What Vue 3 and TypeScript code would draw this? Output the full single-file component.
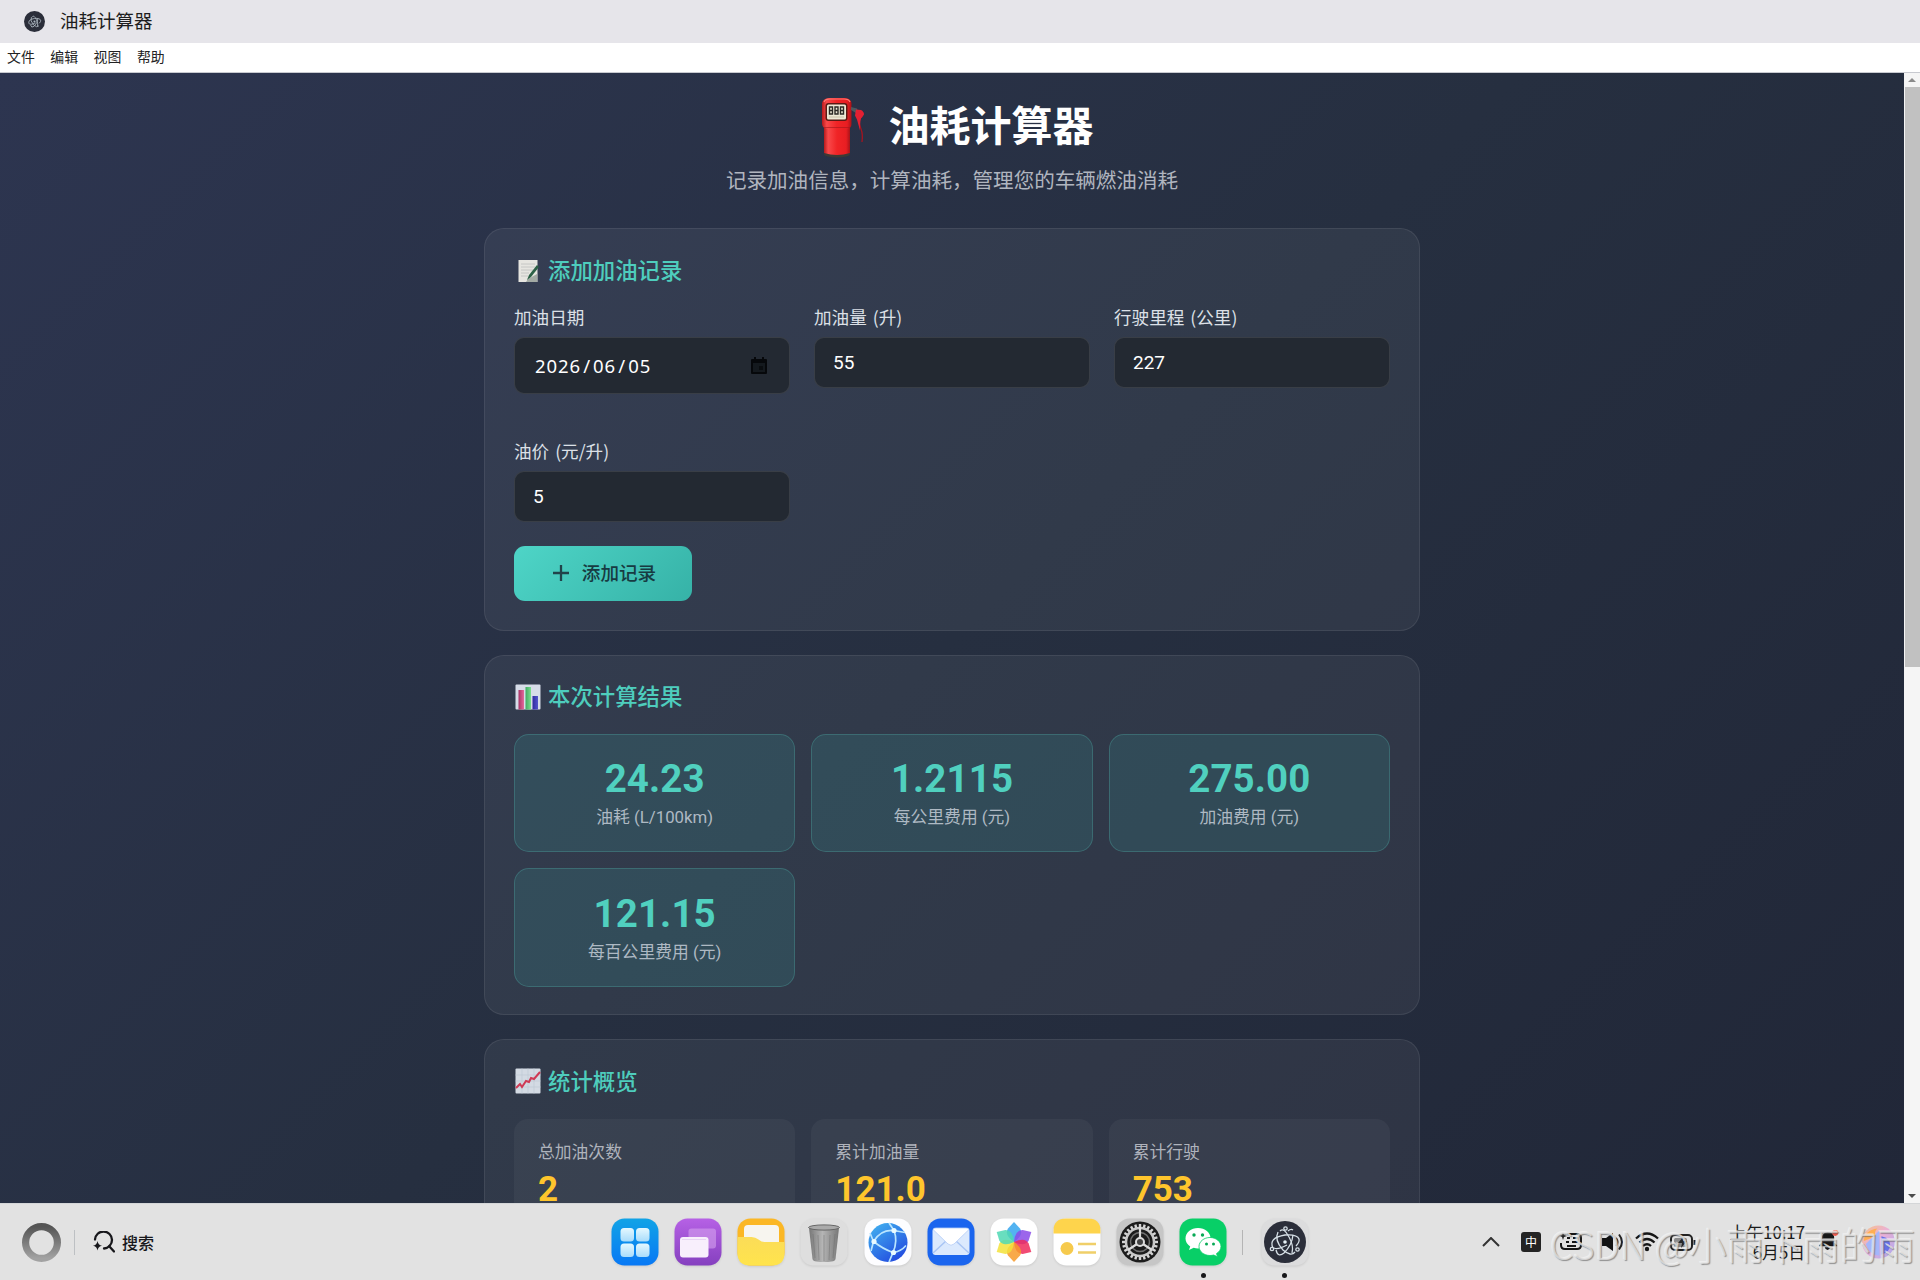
<script setup lang="ts">
interface Metric { value: string; label: string }

const menus: string[] = ['文件', '编辑', '视图', '帮助']

const fields: { label: string; value: string; date?: boolean }[] = [
  { label: '加油日期', value: '2026/06/05', date: true },
  { label: '加油量 (升)', value: '55' },
  { label: '行驶里程 (公里)', value: '227' },
  { label: '油价 (元/升)', value: '5' },
]

const results: Metric[] = [
  { value: '24.23', label: '油耗 (L/100km)' },
  { value: '1.2115', label: '每公里费用 (元)' },
  { value: '275.00', label: '加油费用 (元)' },
  { value: '121.15', label: '每百公里费用 (元)' },
]

const stats: Metric[] = [
  { label: '总加油次数', value: '2' },
  { label: '累计加油量', value: '121.0' },
  { label: '累计行驶', value: '753' },
]

const petals: { angle: number; color: string }[] = [
  { angle: 0, color: '#35a6ee' },
  { angle: 60, color: '#8a4be8' },
  { angle: 120, color: '#ee2c5c' },
  { angle: 180, color: '#f79a2a' },
  { angle: 240, color: '#f3e23a' },
  { angle: 300, color: '#4fd8b4' },
]

const teeth: number[] = Array.from({ length: 24 }, (_, i) => i * 15)
</script>

<template>
  <div class="desktop">
    <header class="titlebar">
      <svg class="app-icon" viewBox="0 0 48 48">
        <circle cx="24" cy="24" r="24" fill="#2b2e3a" />
        <g fill="none" stroke="#a9b3bd" stroke-width="2">
          <path d="M12 30Q7 20 24 17q12-1 14 4 .8 3-3 7" /><path d="M19 13q4-4 9 6 5 9 3 16" /><path d="M13 30q4 2 13-3M15 32q2 8 8 3 8-8 9-18M17 14q-4 8 5 18 8 7 12 2" />
        </g>
        <circle cx="24" cy="24" r="2.4" fill="#a9b3bd" />
      </svg>
      <span>油耗计算器</span>
    </header>
    <nav class="menubar"><span v-for="m in menus" :key="m">{{ m }}</span></nav>

    <div class="viewport">
      <main class="page">
        <div class="hero">
          <svg class="pump" viewBox="0 0 44 62">
            <defs>
              <linearGradient id="pumpRed" x1="0" x2="1">
                <stop offset="0" stop-color="#b81a1c" /><stop offset=".16" stop-color="#f9494a" />
                <stop offset=".5" stop-color="#f02426" /><stop offset=".85" stop-color="#e81e22" /><stop offset="1" stop-color="#a91318" />
              </linearGradient>
            </defs>
            <ellipse cx="16" cy="57" rx="13" ry="3.6" fill="#3d3a35" />
            <path d="M3 28h26v28q-13 4-26 0z" fill="url(#pumpRed)" />
            <path d="M1 6Q2 1.500 8 1h16q6 .5 6.500 5v21q0 4-4 4.500h-21Q1.500 31 1 27z" fill="url(#pumpRed)" />
            <path d="M3 30.500h26" stroke="#a3161a" stroke-width="1" opacity=".6" />
            <path d="M3 5q1-3 6-3h14q5 0 6 3" fill="none" stroke="#ff7b74" stroke-width="1.200" />
            <rect x="4.500" y="6" width="22" height="18" rx="3" fill="#5a1a14" />
            <rect x="6" y="7.500" width="19" height="15" rx="1.500" fill="#eee9d6" />
            <g fill="none" stroke="#2b2925" stroke-width="1.400">
              <path d="M8.500 10h3v7h-3zM8.500 13.500h3M14 10h3v7h-3zM14 13.500h3M19.500 10h3v7h-3zM19.500 13.500h3" />
            </g>
            <path d="M8 20h15" stroke="#c7bea6" />
            <path d="M38 22q0 6 2 10 2 5 1 13" fill="none" stroke="#a51420" stroke-width="1.300" />
            <path d="M30 10l6 1.500 1 3-2 1.500-5-3z" fill="#4d575e" />
            <path d="M35 12.500l5 .5q3 1.500 3 4.500l-2 3q-2 0-2 13l-3-11-2-4z" fill="#e32032" />
          </svg>
          <h1>油耗计算器</h1>
        </div>
        <p class="subtitle">记录加油信息，计算油耗，管理您的车辆燃油消耗</p>

        <section class="card form-card">
          <h2>
            <svg viewBox="0 0 28 28">
              <rect x="4.500" y="4" width="19" height="22" fill="#e6e5e0" />
              <path d="M7 8h14M7 11h14M7 14h12M7 17h8M7 20h7" stroke="#bdbfbe" stroke-width=".8" />
              <path d="M14 23l-2 3h11v-8z" fill="#77827c" opacity=".6" />
              <path d="M23 9l2 2-8 10-4 3 2-5z" fill="#2c6046" />
            </svg><span>添加加油记录</span>
          </h2>
          <div class="form-grid">
            <div v-for="f in fields" :key="f.label" class="field">
              <label>{{ f.label }}</label>
              <div v-if="f.date" class="input date">
                <span><template v-for="(part, i) in f.value.split('/')" :key="i"><i v-if="i > 0">/</i>{{ part }}</template></span>
                <svg viewBox="0 0 16 17">
                  <path d="M3 0h2v2h6V0h2v2h2q1 0 1 1v13q0 1-1 1H1q-1 0-1-1V3q0-1 1-1h2zM2 6v9h12V6z" fill="#06080b" fill-rule="evenodd" />
                  <rect x="2" y="6" width="12" height="9" fill="#14191e" />
                  <rect x="8" y="9" width="4" height="4" fill="#0a0d10" />
                </svg>
              </div>
              <div v-else class="input"><span>{{ f.value }}</span></div>
            </div>
          </div>
          <button type="button">
            <svg viewBox="0 0 16 16"><path d="M8 0v16M0 8h16" stroke="#21434a" stroke-width="2.300" /></svg><span>添加记录</span>
          </button>
        </section>

        <section class="card result-card">
          <h2>
            <svg viewBox="0 0 28 28">
              <defs>
                <linearGradient id="barPink" x1="0" x2="1"><stop stop-color="#a83365" /><stop offset="1" stop-color="#e36a9c" /></linearGradient>
                <linearGradient id="barGreen" x1="0" x2="1"><stop stop-color="#3eab62" /><stop offset="1" stop-color="#7be08f" /></linearGradient>
                <linearGradient id="barBlue" x1="0" x2="1"><stop stop-color="#302a9e" /><stop offset="1" stop-color="#5355cd" /></linearGradient>
              </defs>
              <rect x="1.500" y="1.500" width="25" height="25" rx="1" fill="#d6dce8" />
              <rect x="4.500" y="7" width="5.500" height="19.500" fill="url(#barPink)" />
              <rect x="11.500" y="4" width="5.500" height="22.500" fill="url(#barGreen)" />
              <rect x="18.500" y="13" width="5.500" height="13.500" fill="url(#barBlue)" />
            </svg><span>本次计算结果</span>
          </h2>
          <div class="grid">
            <div v-for="r in results" :key="r.label" class="result">
              <strong>{{ r.value }}</strong><span>{{ r.label }}</span>
            </div>
          </div>
        </section>

        <section class="card stats-card">
          <h2>
            <svg viewBox="0 0 28 28">
              <rect x="1.500" y="1.500" width="25" height="25" rx="1" fill="#d3dae3" />
              <path d="M1.500 8h25M1.500 14h25M1.500 20h25M8 1.500v25M14 1.500v25M20 1.500v25" stroke="#bec9d4" stroke-width=".7" />
              <path d="M2 21l4-4 2 3 4-6 3 1 2-4 3 1 6-7" fill="none" stroke="#cf3a55" stroke-width="2" />
            </svg><span>统计概览</span>
          </h2>
          <div class="grid">
            <div v-for="s in stats" :key="s.label" class="stat">
              <span>{{ s.label }}</span><strong>{{ s.value }}</strong>
            </div>
          </div>
        </section>
      </main>
      <aside class="scrollbar">
        <svg viewBox="0 0 16 14"><path d="M4 9l4-4 4 4z" fill="#8b8b8b" /></svg>
        <div class="thumb"></div>
        <svg class="down" viewBox="0 0 16 14"><path d="M4 5l4 4 4-4z" fill="#4c4c4c" /></svg>
      </aside>
    </div>

    <footer class="taskbar">
      <div class="left">
        <svg class="home" viewBox="0 0 38 38">
          <defs><linearGradient id="ring" x2="0" y2="1"><stop stop-color="#555" /><stop offset="1" stop-color="#a2a2a2" /></linearGradient></defs>
          <circle cx="19" cy="19" r="15.500" fill="none" stroke="url(#ring)" stroke-width="7" />
        </svg>
        <i class="divider"></i>
        <svg class="search" viewBox="0 0 22 22">
          <path d="M2 8.500A8.500 8.500 0 1 1 11 17.500M16 15l5 5.500" fill="none" stroke="#17171b" stroke-width="2.300" stroke-linecap="round" />
          <path d="M4.500 10q.6 4 4.500 4.700-3.900.7-4.500 4.800-.6-4.100-4.500-4.800 3.900-.7 4.500-4.700z" fill="#17171b" />
        </svg>
        <span>搜索</span>
      </div>

      <div class="dock">
        <svg viewBox="0 0 48 48">
          <defs><linearGradient id="launch" x2="0" y2="1"><stop stop-color="#11a3e6" /><stop offset="1" stop-color="#0878f5" /></linearGradient>
            <linearGradient id="tile" x2="0" y2="1"><stop stop-color="#e5f8ff" /><stop offset="1" stop-color="#a9dcfb" /></linearGradient></defs>
          <rect x=".5" y=".5" width="47" height="47" rx="13" fill="url(#launch)" />
          <g fill="url(#tile)"><rect x="9.500" y="10" width="13.500" height="13.500" rx="3.500" /><rect x="25" y="10" width="13.500" height="13.500" rx="3.500" /><rect x="9.500" y="25.500" width="13.500" height="13.500" rx="3.500" /><rect x="25" y="25.500" width="13.500" height="13.500" rx="3.500" /></g>
        </svg>
        <svg viewBox="0 0 48 48">
          <defs><linearGradient id="violet" x2="0" y2="1"><stop stop-color="#b661e5" /><stop offset="1" stop-color="#8540bf" /></linearGradient></defs>
          <rect x=".5" y=".5" width="47" height="47" rx="13" fill="url(#violet)" />
          <rect x="14.500" y="10.500" width="27.500" height="20" rx="3" fill="#d6a2ee" opacity=".6" />
          <rect x="6" y="19" width="28.500" height="20.500" rx="3" fill="#f8effc" />
          <path d="M8 21.500h24" stroke="#e8d4f4" />
        </svg>
        <svg viewBox="0 0 48 48">
          <defs><linearGradient id="folder" x2="0" y2="1"><stop stop-color="#fbdc58" /><stop offset="1" stop-color="#ffe44c" /></linearGradient></defs>
          <rect x=".5" y=".5" width="47" height="47" rx="13" fill="#fbb725" />
          <path d="M7 22V11q0-4 4-4h27q4 0 4 4v15H7z" fill="#f7f5ef" />
          <path d="M.5 19h14q4 0 7 2.500t6 2.500h20v11q0 12.500-13 12.500h-21Q.5 47.500 .5 35z" fill="url(#folder)" />
        </svg>
        <svg viewBox="0 0 48 48">
          <defs><linearGradient id="bin"><stop stop-color="#777" /><stop offset=".45" stop-color="#b5b5b5" /><stop offset="1" stop-color="#777" /></linearGradient></defs>
          <rect x=".5" y=".5" width="47" height="47" rx="13" fill="#dedede" />
          <path d="M9 10l3.500 31q.5 2 4 2.500 8 1 15 0 3.500-.5 4-2.500L39 10z" fill="url(#bin)" />
          <ellipse cx="24" cy="9.500" rx="15.500" ry="2.600" fill="#aaa" stroke="#666" />
          <path d="M13 16l2 24M18 17l1 25M24 17v26M30 17l-1 25M35 16l-2 24" stroke="#696969" opacity=".4" />
        </svg>
        <svg viewBox="0 0 48 48">
          <defs><linearGradient id="globe" x1=".1" x2=".8" y2="1"><stop stop-color="#42b2ef" /><stop offset="1" stop-color="#2147df" /></linearGradient></defs>
          <rect x=".5" y=".5" width="47" height="47" rx="13" fill="#fdfdff" />
          <circle cx="24" cy="24.500" r="19.500" fill="url(#globe)" />
          <g fill="none" stroke="#b9e5ff" stroke-width="1.700"><path d="M9.500 23.500Q17 11 30 12.500M9.500 23.500Q19 31 29 34.500M30 12.500Q34 23 29 34.500M25 5l5 7.500 11 2M6 15l3.500 8.500L7 33M29 34.500L25 44M29 34.500q8-1 13-7" /></g>
          <circle cx="30" cy="12.500" r="2.600" fill="#e9faff" /><circle cx="10" cy="23.500" r="2.600" fill="#e9faff" /><circle cx="29.500" cy="34.500" r="2.600" fill="#e9faff" />
        </svg>
        <svg viewBox="0 0 48 48">
          <rect x=".5" y=".5" width="47" height="47" rx="13" fill="#1b65ee" />
          <rect x="5.500" y="10" width="37" height="27" rx="3" fill="#dbe9fd" />
          <path d="M6 35l13-12M42 35L29 23" stroke="#a9c5f4" stroke-width="1.500" />
          <path d="M6 11.500l15 14.500q3 2.500 6 0l15-14.500q-1-1.500-3-1.500H9q-2 0-3 1.500z" fill="#fff" stroke="#b4ccf6" stroke-width=".8" />
        </svg>
        <svg viewBox="0 0 48 48">
          <rect x=".5" y=".5" width="47" height="47" rx="13" fill="#fff" />
          <path v-for="p in petals" :key="p.angle" d="M24 24Q14 17 18 10.500L24 4l6 6.500Q34 17 24 24z" :fill="p.color" opacity=".85" :transform="`rotate(${p.angle} 24 24)`" />
        </svg>
        <svg viewBox="0 0 48 48">
          <rect x=".5" y=".5" width="47" height="47" rx="13" fill="#fff" />
          <path d="M.5 15.500V13Q.5 .5 13 .5h22Q47.500 .5 47.500 13v2.500z" fill="#fed44c" />
          <circle cx="14" cy="30.500" r="6.500" fill="#f6ca4d" />
          <path d="M25 26h18M25 34.500h18" stroke="#f0cf69" stroke-width="2.600" />
        </svg>
        <svg viewBox="0 0 48 48">
          <rect x=".5" y=".5" width="47" height="47" rx="13" fill="#c6c6c6" />
          <circle cx="24" cy="24" r="20.500" fill="#1c1c1c" />
          <path v-for="t in teeth" :key="t" d="M24 6v4" stroke="#d5d5d5" stroke-width="2.400" :transform="`rotate(${t} 24 24)`" />
          <circle cx="24" cy="24" r="14" fill="none" stroke="#c9c9c9" stroke-width="2.500" />
          <circle cx="24" cy="24" r="9.500" fill="none" stroke="#707070" stroke-width="1.500" />
          <path d="M24 24V9M24 24l-12 8M24 24l12 8" stroke="#ddd" stroke-width="2.200" />
          <circle cx="24" cy="24" r="4" fill="#444" stroke="#ddd" stroke-width="2" />
        </svg>
        <svg viewBox="0 0 48 48">
          <rect x=".5" y=".5" width="47" height="47" rx="13" fill="#08cf67" />
          <path d="M19 10C12 10 6.500 14.500 6.500 20.500c0 3.300 1.800 6 4.700 8L10 32l4.700-2.200c1.400.4 2.800.6 4.300.6 7 0 12.500-4.300 12.500-10S26 10 19 10z" fill="#fff" />
          <path d="M31 19.500c-6 0-11 4-11 9s5 9 11 9c1.300 0 2.600-.2 3.700-.5l3.800 1.800-1-3.200c2.700-1.600 4.500-4.200 4.500-7.100 0-5-5-9-11-9z" fill="#fff" stroke="#08cf67" stroke-width=".8" />
          <g fill="#08a955"><circle cx="15" cy="17" r="1.700" /><circle cx="23.500" cy="17" r="1.700" /><circle cx="27.500" cy="26" r="1.500" /><circle cx="34.500" cy="26" r="1.500" /></g>
        </svg>
        <i class="divider"></i>
        <svg viewBox="0 0 48 48">
          <rect x=".5" y=".5" width="47" height="47" rx="13" fill="#dcdcdd" />
          <circle cx="24" cy="24" r="21" fill="#2b2e3a" />
          <g fill="none" stroke="#d7e0e7" stroke-width="1.300">
            <path d="M12 30Q7 20 24 17q12-1 14 4 .8 3-3 7" /><path d="M19 13q4-4 9 6 5 9 3 16" /><path d="M32 12q-2-1.500-5 1M13 30q4 2 13-3M15 32q2 8 8 3 8-8 9-18M17 14q-4 8 5 18 8 7 12 2" />
            <circle cx="24.500" cy="10.500" r="1.700" /><circle cx="11" cy="31" r="1.700" /><circle cx="36.500" cy="31.500" r="1.700" />
          </g>
          <circle cx="24" cy="24" r="1.800" fill="#e6f0f5" />
        </svg>
        <b class="running wechat"></b><b class="running electron"></b>
      </div>

      <div class="tray">
        <svg class="chevron" viewBox="0 0 18 10"><path d="M1 9l8-8 8 8" fill="none" stroke="#333" stroke-width="2" /></svg>
        <span class="ime">中</span>
        <svg class="keyboard" viewBox="0 0 22 20"><path d="M7 2h10q4 0 4 4v7q0 4-4 4H5q-4 0-4-4v-2M7 6h3M13 6h5M6 10h3M12 10h6M7 14h9" fill="none" stroke="#171717" stroke-width="2" /><path d="M3 0l1 3 3 1-3 1-1 3-1-3-2-1 2-1z" fill="#222" /></svg>
        <svg class="volume" viewBox="0 0 22 18"><path d="M0 5h4l7-5v18l-7-5H0z" fill="#121212" /><path d="M14 5q3 4 0 8M17 1.500q6 7.500 0 15" fill="none" stroke="#222" stroke-width="2" /></svg>
        <svg class="wifi" viewBox="0 0 24 20"><path d="M1 6.500q11-10 22 0M4.500 10.500q7.500-7 15 0M8 14q4-3.500 8 0" fill="none" stroke="#161616" stroke-width="2.300" /><circle cx="12" cy="17" r="2.200" fill="#161616" /></svg>
        <svg class="battery" viewBox="0 0 26 17"><rect x="1" y="1" width="21" height="15" rx="4" fill="none" stroke="#222" stroke-width="2" /><rect x="4" y="4" width="13" height="9" rx="1.500" fill="#8c8c8c" /><path d="M13 3l-5 6h4l-1 5 6-7h-4z" fill="#282828" /><path d="M24.500 6v5" stroke="#222" stroke-width="2" /></svg>
        <div class="clock"><span>上午10:17</span><span>6月5日</span></div>
        <svg class="bell" viewBox="0 0 22 22"><path d="M1 16l3-3V9q0-6 6-7 7 0 7 7v4l3 3v1H1zM7 18h6q-1 3-3 3t-3-3z" fill="#171717" /><circle cx="18" cy="3" r="3.200" fill="#ef5548" /></svg>
        <svg class="orb" viewBox="0 0 36 36">
          <defs><linearGradient id="orbFill" x2="1" y2="1"><stop stop-color="#ffb45c" /><stop offset=".45" stop-color="#ee9bd1" /><stop offset="1" stop-color="#8f8cf5" /></linearGradient></defs>
          <circle cx="18" cy="18" r="17" fill="url(#orbFill)" opacity=".7" />
          <path d="M19 6v26Q8 31 5 20z" fill="#a4b6fb" /><path d="M21 12q9 2 9 9t-9 10z" fill="#6770e8" /><path d="M3 17q0-11 14-13-4 3-2 8z" fill="#ffae52" />
        </svg>
      </div>
      <div class="watermark">CSDN @小雨下雨的雨</div>
    </footer>
  </div>
</template>

<style>
body { margin: 0; overflow: hidden; }
</style>

<style scoped>
* { box-sizing: border-box; }
.desktop { width: 1920px; height: 1280px; display: flex; flex-direction: column; overflow: hidden; font-family: "Noto Sans CJK SC", sans-serif; }
svg { display: block; flex: none; }
.titlebar { height: 43px; flex: none; background: #e6e5ea; display: flex; align-items: center; gap: 15px; padding-left: 24px; font-size: 18.5px; color: #1d1d20; line-height: 42px; }
.titlebar span { margin-top: -4px; }
.app-icon { width: 21px; height: 21px; }
.menubar { height: 30px; flex: none; background: #fff; display: flex; gap: 15.5px; padding-left: 7px; font-size: 13.9px; line-height: 27px; color: #222; border-bottom: 1px solid #c8cad0; }
.viewport { height: 1130px; flex: none; display: flex; overflow: hidden; }
.page { width: 1904px; height: 1130px; padding-top: 21px; display: flex; flex-direction: column; align-items: center; overflow: hidden; background: linear-gradient(135deg, #2d3550 0%, #262f40 50%, #212738 100%); }
.hero { display: flex; flex: none; height: 66px; align-items: center; margin-left: 10px; gap: 25px; }
.pump { width: 44px; height: 62px; margin-top: 2px; }
h1 { margin: -8px 0 0 -1px; font-size: 41px; line-height: 60px; font-weight: 700; color: #fff; }
.subtitle { flex: none; margin: 4px 0 0; height: 64px; font-size: 20.55px; line-height: 30px; color: #b0b5bf; }
.card { width: 936px; flex: none; padding: 29px; border: 1px solid rgba(255,255,255,.08); border-radius: 20px; background: rgba(255,255,255,.055); margin-bottom: 24px; }
.form-card { height: 403px; }
.result-card { height: 360px; }
.stats-card { height: 300px; }
h2 { margin: -3px 0 0; height: 30px; display: flex; align-items: center; gap: 6px; color: #4ecdbd; font-size: 22.4px; line-height: 30px; font-weight: 500; }
h2 svg { width: 28px; height: 28px; }
h2 span { margin-top: -2px; }
.result-card h2 span { margin-top: -4px; }
.form-grid { margin-top: 20px; display: grid; grid-template-columns: repeat(3, 276px); grid-template-rows: 134px 50px; column-gap: 24px; }
.field label { display: block; height: 32px; font-size: 17.6px; line-height: 24px; font-weight: 400; color: #dce0e7; word-spacing: 2px; }
.input { width: 276px; height: 51px; border: 1px solid rgba(255,255,255,.1); border-radius: 10px; background: #232932; padding: 0 21px 0 18px; color: #fff; display: flex; align-items: center; justify-content: space-between; font-family: Roboto, sans-serif; font-size: 19px; }
.input span { line-height: 24px; }
.input.date { height: 57px; padding-left: 20px; }
.input.date span { font-family: "Noto Sans", sans-serif; font-size: 18.5px; letter-spacing: .9px; margin-top: 1px; }
.input.date i { font-style: normal; margin: 0 2.2px; }
.input.date svg { width: 16px; height: 17px; margin-right: 1px; }
button { width: 178px; height: 55px; margin-top: 56.5px; border: 0; border-radius: 11px; padding: 0 0 0 3px; background: linear-gradient(135deg, #4ed5c7, #36b2a7); color: #173b42; display: flex; align-items: center; justify-content: center; gap: 13px; font: 500 18.6px/26px "Noto Sans CJK SC", sans-serif; }
button svg { width: 16px; height: 16px; }
button span { margin-top: -3px; }
.grid { display: grid; grid-template-columns: repeat(3, 1fr); gap: 16px; }
.result-card .grid { margin-top: 21.5px; }
.result { height: 118.5px; border: 1px solid rgba(90,210,195,.24); border-radius: 15px; background: rgba(55,150,150,.2); text-align: center; padding-top: 21.5px; }
.result strong { display: block; height: 47px; line-height: 46px; font-family: Roboto, sans-serif; font-size: 38.5px; font-weight: 700; color: #50d0bf; letter-spacing: .1px; }
.result span { display: block; line-height: 28px; font-family: Roboto, "Noto Sans CJK SC", sans-serif; font-size: 16.8px; color: #aeb9c3; }
.stats-card .grid { margin-top: 23px; }
.stat { height: 180px; border-radius: 14px; background: rgba(255,255,255,.045); padding: 19px 24px; }
.stat span { display: block; height: 29px; line-height: 26px; font-size: 16.8px; color: #afb3bc; }
.stat strong { display: block; line-height: 46px; font-family: Roboto, sans-serif; font-size: 35px; font-weight: 700; color: #ffc52c; }
.scrollbar { width: 16px; height: 1130px; background: #f5f5f5; display: flex; flex-direction: column; }
.scrollbar svg { width: 16px; height: 14px; }
.thumb { height: 580px; background: #c1c1c1; margin: 0 0 0 1px; }
.scrollbar .down { margin-top: auto; }
.taskbar { position: relative; height: 77px; flex: none; display: flex; background: #e2e2e2; border-top: 1px solid #d4d6d8; }
.left { width: 611px; display: flex; align-items: center; padding-left: 22px; }
.home { width: 39px; height: 39px; margin-right: 13px; }
.divider { width: 1px; height: 25px; background: #bdc0c3; }
.search { width: 22px; height: 22px; margin: 0 7px 0 18px; }
.left span { font-size: 16px; font-weight: 500; color: #17171b; margin-top: -1px; }
.dock { position: relative; width: 849px; display: flex; align-items: center; gap: 15.15px; }
.dock svg { width: 48px; height: 48px; filter: drop-shadow(0 1px 1px rgba(0,0,0,.1)); }
.dock .divider { margin-right: 2px; background: #b5b5b5; }
.running { position: absolute; width: 5px; height: 5px; border-radius: 50%; background: #17171a; top: 69px; }
.wechat { left: 590px; }
.electron { left: 671px; }
.tray { display: flex; align-items: center; padding-left: 22px; width: 460px; }
.chevron { width: 18px; height: 10px; }
.ime { width: 20px; height: 20px; margin-left: 21px; border-radius: 3px; background: #242424; color: #fff; font-size: 12px; line-height: 19px; text-align: center; }
.keyboard { width: 22px; height: 20px; margin-left: 19px; }
.volume { width: 22px; height: 18px; margin-left: 20px; }
.wifi { width: 24px; height: 20px; margin-left: 11px; }
.battery { width: 26px; height: 17px; margin-left: 11px; }
.clock { width: 84px; margin-left: 25px; display: flex; flex-direction: column; align-items: flex-end; color: #1b1b1b; font-size: 16.8px; line-height: 20px; margin-top: -1px; }
.bell { width: 21px; height: 21px; margin-left: 13px; margin-top: -3px; }
.orb { width: 35px; height: 36px; margin-left: 22px; }
.watermark { position: absolute; left: 1550px; top: 12px; font-size: 37.7px; line-height: 56px; font-weight: 300; white-space: nowrap; color: rgba(232,232,232,.72); text-shadow: 1px 1px 1px rgba(100,100,100,.65), -1px -1px 0 rgba(255,255,255,.45); }
</style>
